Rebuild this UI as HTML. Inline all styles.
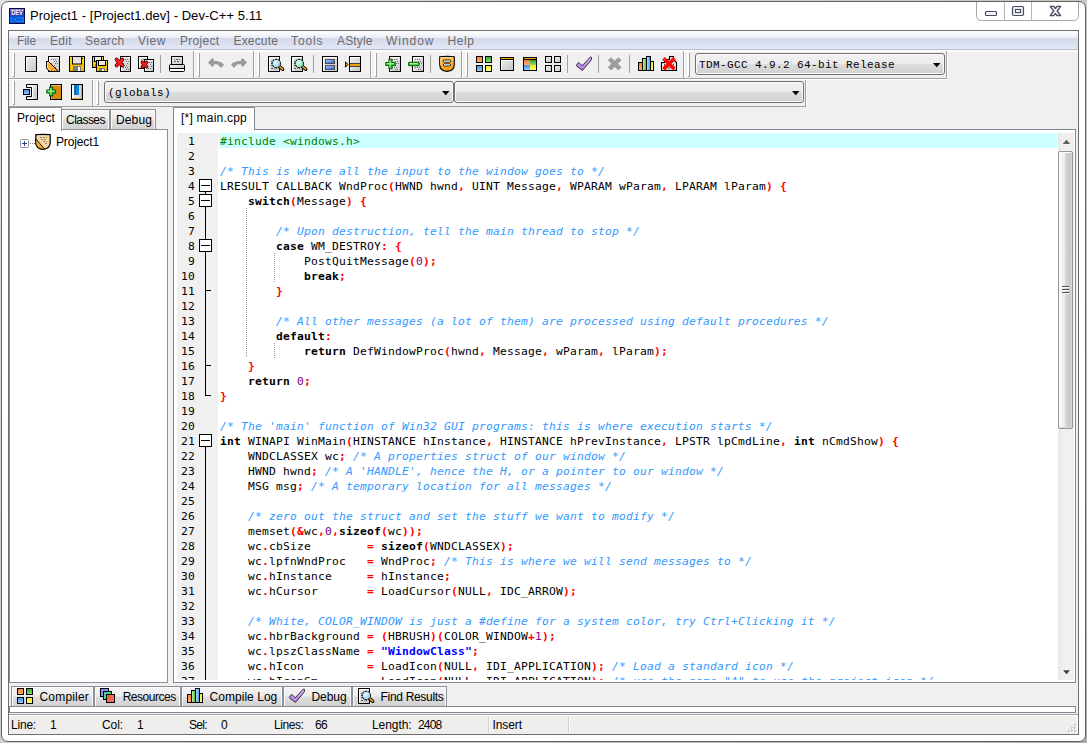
<!DOCTYPE html>
<html lang="en"><head><meta charset="utf-8"><title>Project1 - [Project1.dev] - Dev-C++ 5.11</title>
<style>
html,body{margin:0;padding:0;}
body{width:1087px;height:743px;overflow:hidden;background:linear-gradient(135deg,#e2e2e2 0%,#cfcfcf 35%,#c4c4c4 70%,#adadad 100%);position:relative;font-family:"Liberation Sans", "DejaVu Sans", sans-serif;font-size:12px;}
body>div,body>svg,body>span{position:absolute;}
.ic{position:absolute;overflow:visible;}
.t{position:absolute;white-space:pre;line-height:16px;height:16px;margin-top:-12px;color:#000;font-family:"Liberation Sans", "DejaVu Sans", sans-serif;font-size:12px;}
.title{font-size:13px;}
.menu{color:#6d6d6d;}
.mono{font-family:"Liberation Mono", "DejaVu Sans Mono", monospace;font-size:11px;letter-spacing:0.4px;}
#code,#nums{font-family:"DejaVu Sans Mono", "Liberation Mono", monospace;font-size:11.3px;overflow:hidden;color:#000;}
#code{letter-spacing:0.197px;}
#nums{text-align:right;letter-spacing:0.197px;}
.ln{height:15px;line-height:15px;white-space:pre;}
.c{color:#3399ff;font-style:italic;}
.p{color:#008000;}
.k{font-weight:bold;}
.y{color:#ff0000;font-weight:bold;}
.n{color:#800080;}
.s{color:#0000ff;font-weight:bold;}
</style></head>
<body>
<svg width="0" height="0" style="position:absolute"><defs>
<linearGradient id="gG" x1="0" y1="0" x2="1" y2="1"><stop offset="0" stop-color="#ececec"/><stop offset="0.5" stop-color="#dcdcdc"/><stop offset="1" stop-color="#c4c4c4"/></linearGradient>
<linearGradient id="gY" x1="0" y1="0" x2="0" y2="1"><stop offset="0" stop-color="#ffe600"/><stop offset="1" stop-color="#eeb400"/></linearGradient>
<linearGradient id="gO" x1="0" y1="0" x2="0" y2="1"><stop offset="0" stop-color="#ff7a30"/><stop offset="1" stop-color="#ffb070"/></linearGradient>
<linearGradient id="gGr" x1="0" y1="0" x2="0" y2="1"><stop offset="0" stop-color="#2f9e2f"/><stop offset="1" stop-color="#8fe070"/></linearGradient>
<linearGradient id="gB" x1="0" y1="0" x2="0" y2="1"><stop offset="0" stop-color="#3c90e8"/><stop offset="1" stop-color="#9ccdfc"/></linearGradient>
<linearGradient id="gYl" x1="0" y1="0" x2="0" y2="1"><stop offset="0" stop-color="#f6e820"/><stop offset="1" stop-color="#fffc80"/></linearGradient>
<linearGradient id="gSh" x1="0" y1="0" x2="0" y2="1"><stop offset="0" stop-color="#ffc050"/><stop offset="1" stop-color="#f79a10"/></linearGradient>
<linearGradient id="gP" x1="0" y1="0" x2="0" y2="1"><stop offset="0" stop-color="#d9b8ff"/><stop offset="1" stop-color="#b07cf0"/></linearGradient>
<linearGradient id="gB2" x1="0" y1="0" x2="0.6" y2="1"><stop offset="0" stop-color="#c0d8ff"/><stop offset="1" stop-color="#2a6ae0"/></linearGradient>
<linearGradient id="gGr2" x1="0" y1="0" x2="1" y2="0"><stop offset="0" stop-color="#c8f8a0"/><stop offset="1" stop-color="#48b838"/></linearGradient>
<linearGradient id="gB3" x1="0" y1="0" x2="1" y2="0"><stop offset="0" stop-color="#b8dcff"/><stop offset="1" stop-color="#4898f0"/></linearGradient>
<radialGradient id="gLb" cx="0.4" cy="0.4" r="0.7"><stop offset="0" stop-color="#e8fbff"/><stop offset="1" stop-color="#8cd0e8"/></radialGradient>
<radialGradient id="gLg" cx="0.4" cy="0.4" r="0.7"><stop offset="0" stop-color="#e0fff0"/><stop offset="1" stop-color="#7fdcb0"/></radialGradient>
</defs></svg>
<div style="left:1px;top:1px;width:1085px;height:741px;border:1px solid #626262;border-radius:7px;background:#fff;box-sizing:border-box;"></div>
<svg class="ic" style="left:9px;top:8px" width="16" height="16" viewBox="0 0 16 16"><rect x="0.500" y="0.500" width="15" height="15" fill="#1838b8" stroke="#0a0a3c"/><rect x="1" y="1" width="14" height="1" fill="#8c8cd8"/><rect x="1" y="2" width="14" height="1" fill="#5a60c8"/><rect x="1" y="3" width="14" height="5" fill="#2a44bc"/><rect x="1" y="8" width="14" height="1" fill="#0c50d8"/><rect x="1" y="9" width="14" height="6" fill="#0e7cf8"/><rect x="1" y="14" width="14" height="1" fill="#0a58d0"/><text x="8" y="7.200" text-anchor="middle" font-family="Liberation Sans, sans-serif" font-weight="bold" font-size="6.500" fill="#fff" textLength="11.500" lengthAdjust="spacingAndGlyphs">DEV</text><text x="8" y="13.600" text-anchor="middle" font-family="Liberation Sans, sans-serif" font-weight="bold" font-size="6.500" fill="#0a46c4" textLength="11" lengthAdjust="spacingAndGlyphs">C++</text></svg>
<span id="t1" class="t ui title" style="left:30px;top:20px;letter-spacing:0.05px;">Project1 - [Project1.dev] - Dev-C++ 5.11</span>
<svg class="ic" style="left:976px;top:2px" width="104" height="20" viewBox="0 1 104 20">
<path d="M0.5,1 V14.5 Q0.5,19.5 5.5,19.5 H97.5 Q102.5,19.5 102.5,14.5 V1" fill="#fff" stroke="#a6a6a6" stroke-width="1"/>
<path d="M28.5,1 V19 M55.5,1 V19" stroke="#b4b4b4" stroke-width="1"/>
<rect x="9.5" y="10.5" width="11" height="4" rx="1" fill="#f4f4f4" stroke="#454c66" stroke-width="1.2"/>
<rect x="36.500" y="5.500" width="11" height="9" rx="1.2" fill="#eee" stroke="#454c66" stroke-width="1.2"/>
<rect x="39.5" y="8.5" width="5" height="3" fill="#fff" stroke="#454c66" stroke-width="1.1"/>
<path d="M74.200,5.400 L77.800,5.400 L79.400,7.560 L81,5.400 L84.600,5.400 L81.200,10 L84.600,14.600 L81,14.600 L79.400,12.440 L77.800,14.600 L74.200,14.600 L77.600,10 Z" fill="#f2f2f2" stroke="#454c66" stroke-width="1.300" stroke-linejoin="round"/>
</svg>
<div style="left:8px;top:30px;width:1071px;height:705px;border:1px solid #6e6e6e;box-sizing:border-box;background:#f0f0f0;"></div>
<div style="left:9px;top:31px;width:1069px;height:18px;background:linear-gradient(#ffffff 0%,#f4f6fc 20%,#e9edf8 38.8%,#d4d9ec 39%,#dbe0f0 70%,#e3e7f6 100%);"></div>
<div style="left:9px;top:49px;width:1069px;height:1px;background:#b6bccf;"></div>
<div style="left:9px;top:50px;width:1069px;height:2px;background:#fdfdfd;"></div>
<span id="t2" class="t ui menu" style="left:17px;top:45px;letter-spacing:-0.086px;">File</span>
<span id="t3" class="t ui menu" style="left:50px;top:45px;letter-spacing:0.328px;">Edit</span>
<span id="t4" class="t ui menu" style="left:85px;top:45px;letter-spacing:0.245px;">Search</span>
<span id="t5" class="t ui menu" style="left:138px;top:45px;letter-spacing:0.551px;">View</span>
<span id="t6" class="t ui menu" style="left:180px;top:45px;letter-spacing:0.306px;">Project</span>
<span id="t7" class="t ui menu" style="left:233.5px;top:45px;letter-spacing:0.163px;">Execute</span>
<span id="t8" class="t ui menu" style="left:291px;top:45px;letter-spacing:0.897px;">Tools</span>
<span id="t9" class="t ui menu" style="left:337px;top:45px;letter-spacing:0.135px;">AStyle</span>
<span id="t10" class="t ui menu" style="left:386px;top:45px;letter-spacing:0.969px;">Window</span>
<span id="t11" class="t ui menu" style="left:447.5px;top:45px;letter-spacing:0.578px;">Help</span>
<div style="left:9px;top:78px;width:938px;height:1px;background:#a0a0a0;"></div>
<div style="left:9px;top:79px;width:938px;height:1px;background:#fff;"></div>
<div style="left:12px;top:53px;width:2px;height:23px;background:#fff;"></div>
<div style="left:14px;top:53px;width:1px;height:24px;background:#a0a0a0;"></div>
<div style="left:13px;top:76px;width:1px;height:1px;background:#a0a0a0;"></div>
<div style="left:197px;top:53px;width:2px;height:23px;background:#fff;"></div>
<div style="left:199px;top:53px;width:1px;height:24px;background:#a0a0a0;"></div>
<div style="left:198px;top:76px;width:1px;height:1px;background:#a0a0a0;"></div>
<div style="left:257px;top:53px;width:2px;height:23px;background:#fff;"></div>
<div style="left:259px;top:53px;width:1px;height:24px;background:#a0a0a0;"></div>
<div style="left:258px;top:76px;width:1px;height:1px;background:#a0a0a0;"></div>
<div style="left:374px;top:53px;width:2px;height:23px;background:#fff;"></div>
<div style="left:376px;top:53px;width:1px;height:24px;background:#a0a0a0;"></div>
<div style="left:375px;top:76px;width:1px;height:1px;background:#a0a0a0;"></div>
<div style="left:465px;top:53px;width:2px;height:23px;background:#fff;"></div>
<div style="left:467px;top:53px;width:1px;height:24px;background:#a0a0a0;"></div>
<div style="left:466px;top:76px;width:1px;height:1px;background:#a0a0a0;"></div>
<div style="left:687px;top:53px;width:2px;height:23px;background:#fff;"></div>
<div style="left:689px;top:53px;width:1px;height:24px;background:#a0a0a0;"></div>
<div style="left:688px;top:76px;width:1px;height:1px;background:#a0a0a0;"></div>
<div style="left:193px;top:51px;width:1px;height:27px;background:#a0a0a0;"></div>
<div style="left:194px;top:51px;width:1px;height:27px;background:#fff;"></div>
<div style="left:253px;top:51px;width:1px;height:27px;background:#a0a0a0;"></div>
<div style="left:254px;top:51px;width:1px;height:27px;background:#fff;"></div>
<div style="left:370px;top:51px;width:1px;height:27px;background:#a0a0a0;"></div>
<div style="left:371px;top:51px;width:1px;height:27px;background:#fff;"></div>
<div style="left:461px;top:51px;width:1px;height:27px;background:#a0a0a0;"></div>
<div style="left:462px;top:51px;width:1px;height:27px;background:#fff;"></div>
<div style="left:683px;top:51px;width:1px;height:27px;background:#a0a0a0;"></div>
<div style="left:684px;top:51px;width:1px;height:27px;background:#fff;"></div>
<div style="left:946px;top:51px;width:1px;height:27px;background:#a0a0a0;"></div>
<div style="left:947px;top:51px;width:1px;height:27px;background:#fff;"></div>
<svg class="ic" style="left:23px;top:56px" width="16" height="16" viewBox="0 0 16 16"><rect x="2.5" y="0.5" width="11" height="15" fill="url(#gG)" stroke="#000" stroke-width="1"/><path d="M3.5,15 V1.5 H13" fill="none" stroke="#fff" stroke-width="1"/></svg>
<svg class="ic" style="left:46px;top:56px" width="16" height="16" viewBox="0 0 16 16"><rect x="2.5" y="0.5" width="11" height="15" fill="url(#gG)" stroke="#000" stroke-width="1"/><path d="M3.5,15 V1.5 H13" fill="none" stroke="#fff" stroke-width="1"/><rect x="5" y="3" width="1" height="1" fill="#707070"/><rect x="7" y="3" width="1" height="1" fill="#707070"/><rect x="9" y="3" width="1" height="1" fill="#707070"/><rect x="8" y="5" width="1" height="1" fill="#707070"/><rect x="10" y="5" width="1" height="1" fill="#707070"/><rect x="5" y="7" width="1" height="1" fill="#707070"/><rect x="9" y="7" width="1" height="1" fill="#707070"/><rect x="11" y="7" width="1" height="1" fill="#707070"/><rect x="6" y="9" width="1" height="1" fill="#707070"/><rect x="8" y="9" width="1" height="1" fill="#707070"/><rect x="5" y="11" width="1" height="1" fill="#707070"/><rect x="7" y="11" width="1" height="1" fill="#707070"/><rect x="9" y="11" width="1" height="1" fill="#707070"/><rect x="8" y="13" width="1" height="1" fill="#707070"/><rect x="10" y="13" width="1" height="1" fill="#707070"/><path d="M2.5,5.500 L0.500,5.500 V11 Q1,15.500 7,15.500 H12.500 Z" fill="url(#gSh)" stroke="#000" stroke-width="1" stroke-linejoin="round"/><path d="M1.500,6.500 V11 Q2,14 5,14.500" fill="none" stroke="#ffe0a0" stroke-width="1"/></svg>
<svg class="ic" style="left:69px;top:56px" width="16" height="16" viewBox="0 0 16 16"><rect x="0.5" y="0.5" width="15" height="15" fill="url(#gY)" stroke="#000"/><rect x="3.5" y="0.5" width="9" height="7.5" fill="#e4e4e4" stroke="#000"/><rect x="4" y="10" width="8" height="5" fill="#7c7c7c"/><rect x="9" y="11" width="2" height="4" fill="#fff"/><rect x="13" y="2" width="1" height="1" fill="#000"/></svg>
<svg class="ic" style="left:92px;top:56px" width="16" height="16" viewBox="0 0 16 16"><rect x="0.5" y="0.5" width="11" height="11" fill="url(#gY)" stroke="#000"/><rect x="2.5" y="0.5" width="7" height="5" fill="#ececec" stroke="#000"/><rect x="3" y="8" width="6" height="3" fill="#7c7c7c"/><rect x="6" y="9" width="2" height="2" fill="#e8e8e8"/><rect x="10" y="1" width="1" height="1" fill="#fff8a0"/><rect x="4.5" y="4.5" width="11" height="11" fill="url(#gY)" stroke="#000"/><rect x="6.5" y="4.5" width="7" height="5" fill="#ececec" stroke="#000"/><rect x="7" y="12" width="6" height="3" fill="#7c7c7c"/><rect x="10" y="13" width="2" height="2" fill="#e8e8e8"/><rect x="14" y="5" width="1" height="1" fill="#fff8a0"/></svg>
<svg class="ic" style="left:115px;top:56px" width="16" height="16" viewBox="0 0 16 16"><rect x="5.5" y="0.5" width="10" height="15" fill="url(#gG)" stroke="#000" stroke-width="1"/><path d="M6.5,15 V1.5 H15" fill="none" stroke="#fff" stroke-width="1"/><rect x="8" y="3" width="1" height="1" fill="#707070"/><rect x="10" y="3" width="1" height="1" fill="#707070"/><rect x="12" y="3" width="1" height="1" fill="#707070"/><rect x="11" y="5" width="1" height="1" fill="#707070"/><rect x="13" y="5" width="1" height="1" fill="#707070"/><rect x="8" y="7" width="1" height="1" fill="#707070"/><rect x="12" y="7" width="1" height="1" fill="#707070"/><rect x="9" y="9" width="1" height="1" fill="#707070"/><rect x="11" y="9" width="1" height="1" fill="#707070"/><rect x="8" y="11" width="1" height="1" fill="#707070"/><rect x="10" y="11" width="1" height="1" fill="#707070"/><rect x="12" y="11" width="1" height="1" fill="#707070"/><rect x="11" y="13" width="1" height="1" fill="#707070"/><rect x="13" y="13" width="1" height="1" fill="#707070"/><path d="M1.6,3.6 L7.4,9.4 M7.4,3.6 L1.6,9.4" stroke="#600000" stroke-width="3.8000000000000003" stroke-linecap="round" fill="none"/><path d="M1.6,3.6 L7.4,9.4 M7.4,3.6 L1.6,9.4" stroke="#ff2020" stroke-width="2.2" stroke-linecap="round" fill="none"/></svg>
<svg class="ic" style="left:138px;top:56px" width="16" height="16" viewBox="0 0 16 16"><rect x="0.5" y="0.5" width="9" height="12" fill="url(#gG)" stroke="#000" stroke-width="1"/><path d="M1.5,12 V1.5 H9" fill="none" stroke="#fff" stroke-width="1"/><rect x="3" y="3" width="1" height="1" fill="#707070"/><rect x="5" y="3" width="1" height="1" fill="#707070"/><rect x="7" y="3" width="1" height="1" fill="#707070"/><rect x="6" y="5" width="1" height="1" fill="#707070"/><rect x="3" y="7" width="1" height="1" fill="#707070"/><rect x="7" y="7" width="1" height="1" fill="#707070"/><rect x="4" y="9" width="1" height="1" fill="#707070"/><rect x="6" y="9" width="1" height="1" fill="#707070"/><rect x="6.5" y="3.5" width="9" height="12" fill="url(#gG)" stroke="#000" stroke-width="1"/><path d="M7.5,15 V4.5 H15" fill="none" stroke="#fff" stroke-width="1"/><rect x="9" y="6" width="1" height="1" fill="#707070"/><rect x="11" y="6" width="1" height="1" fill="#707070"/><rect x="13" y="6" width="1" height="1" fill="#707070"/><rect x="12" y="8" width="1" height="1" fill="#707070"/><rect x="9" y="10" width="1" height="1" fill="#707070"/><rect x="13" y="10" width="1" height="1" fill="#707070"/><rect x="10" y="12" width="1" height="1" fill="#707070"/><rect x="12" y="12" width="1" height="1" fill="#707070"/><path d="M4.3,6.3 L8.7,10.7 M8.7,6.3 L4.3,10.7" stroke="#600000" stroke-width="3.4000000000000004" stroke-linecap="round" fill="none"/><path d="M4.3,6.3 L8.7,10.7 M8.7,6.3 L4.3,10.7" stroke="#ff2020" stroke-width="1.8" stroke-linecap="round" fill="none"/></svg>
<svg class="ic" style="left:169px;top:56px" width="16" height="16" viewBox="0 0 16 16"><rect x="2.5" y="0.5" width="11" height="8" fill="url(#gG)" stroke="#000"/><path d="M5,3.500 H6 M7,3.500 H9 M10,3.500 H11 M5,5.500 H7 M8,5.500 H10" stroke="#606060"/><rect x="0.5" y="8.5" width="15" height="7" rx="1" fill="#fff" stroke="#000"/><rect x="1" y="9" width="14" height="3" fill="url(#gG)"/><path d="M0.500,12.500 H15.500" stroke="#000"/></svg>
<svg class="ic" style="left:208px;top:56px" width="16" height="16" viewBox="0 0 16 16"><path d="M0,6.400 L4.400,2 L5.900,3.400 L5.900,5 L9.700,5 L11.300,6 L13.400,6.200 L16,8.800 L13,11.900 L9.800,8.600 L7.500,8.200 L5.900,8.200 L5.900,9.600 L4.400,11 Z" fill="#9b9b9b"/></svg>
<svg class="ic" style="left:231px;top:56px" width="16" height="16" viewBox="0 0 16 16"><g transform="translate(16,0) scale(-1,1)"><path d="M0,6.400 L4.400,2 L5.900,3.400 L5.900,5 L9.700,5 L11.300,6 L13.400,6.200 L16,8.800 L13,11.900 L9.800,8.600 L7.500,8.200 L5.900,8.200 L5.900,9.600 L4.400,11 Z" fill="#9b9b9b"/></g></svg>
<svg class="ic" style="left:268px;top:56px" width="16" height="16" viewBox="0 0 16 16"><rect x="0.5" y="0.5" width="11" height="15" fill="url(#gG)" stroke="#000" stroke-width="1"/><path d="M1.5,15 V1.5 H11" fill="none" stroke="#fff" stroke-width="1"/><path d="M3,5.500 H4 M3,7.500 H4 M3,9.500 H4 M3,12.500 H5 M6,12.500 H7 M8,12.500 H9" stroke="#505050"/><path d="M11.5,10.600000000000001 L14.700000000000001,13.3" stroke="#000" stroke-width="3.4" stroke-linecap="round"/><path d="M11.9,10.8 L14.600000000000001,13.100000000000001" stroke="#f0a020" stroke-width="1.7" stroke-linecap="round"/><circle cx="8.3" cy="7.4" r="4.1" fill="url(#gLb)" stroke="#111" stroke-width="1.1" stroke-dasharray="2.2,0.7"/><circle cx="8.3" cy="7.4" r="3.4" fill="url(#gLb)"/></svg>
<svg class="ic" style="left:291px;top:56px" width="16" height="16" viewBox="0 0 16 16"><rect x="0.5" y="0.5" width="11" height="15" fill="url(#gG)" stroke="#000" stroke-width="1"/><path d="M1.5,15 V1.5 H11" fill="none" stroke="#fff" stroke-width="1"/><path d="M3,5.500 H4 M3,7.500 H4 M3,9.500 H4 M3,12.500 H5 M6,12.500 H7 M8,12.500 H9" stroke="#505050"/><path d="M11.5,10.600000000000001 L14.700000000000001,13.3" stroke="#000" stroke-width="3.4" stroke-linecap="round"/><path d="M11.9,10.8 L14.600000000000001,13.100000000000001" stroke="#f0a020" stroke-width="1.7" stroke-linecap="round"/><circle cx="8.3" cy="7.4" r="4.1" fill="url(#gLg)" stroke="#111" stroke-width="1.1" stroke-dasharray="2.2,0.7"/><circle cx="8.3" cy="7.4" r="3.4" fill="url(#gLg)"/></svg>
<svg class="ic" style="left:322px;top:56px" width="16" height="16" viewBox="0 0 16 16"><rect x="0.5" y="0.5" width="15" height="15" fill="url(#gG)" stroke="#000"/><path d="M1.500,15 V1.500 H15" fill="none" stroke="#fff"/><rect x="3.5" y="3.500" width="9" height="4" fill="url(#gB2)" stroke="#505050"/><rect x="3.5" y="9.500" width="9" height="4" fill="url(#gB2)" stroke="#505050"/></svg>
<svg class="ic" style="left:345px;top:56px" width="16" height="16" viewBox="0 0 16 16"><rect x="4.5" y="0.5" width="11" height="15" fill="url(#gG)" stroke="#000"/><path d="M5.500,15 V1.500 H15" fill="none" stroke="#fff"/><rect x="5" y="8" width="10" height="2" fill="#f0a000"/><path d="M5,7.500 H15 M5,10.500 H15" stroke="#404040" stroke-width="1"/><path d="M0.500,5.800 L3,8.500 L0.500,11.200 Z" fill="#f0a000" stroke="#000" stroke-width="0.9"/></svg>
<svg class="ic" style="left:385px;top:56px" width="16" height="16" viewBox="0 0 16 16"><rect x="4.5" y="0.5" width="11" height="15" fill="url(#gG)" stroke="#000" stroke-width="1"/><path d="M5.5,15 V1.5 H15" fill="none" stroke="#fff" stroke-width="1"/><rect x="7" y="3" width="1" height="1" fill="#707070"/><rect x="9" y="3" width="1" height="1" fill="#707070"/><rect x="11" y="3" width="1" height="1" fill="#707070"/><rect x="10" y="5" width="1" height="1" fill="#707070"/><rect x="12" y="5" width="1" height="1" fill="#707070"/><rect x="7" y="7" width="1" height="1" fill="#707070"/><rect x="11" y="7" width="1" height="1" fill="#707070"/><rect x="13" y="7" width="1" height="1" fill="#707070"/><rect x="8" y="9" width="1" height="1" fill="#707070"/><rect x="10" y="9" width="1" height="1" fill="#707070"/><rect x="7" y="11" width="1" height="1" fill="#707070"/><rect x="9" y="11" width="1" height="1" fill="#707070"/><rect x="11" y="11" width="1" height="1" fill="#707070"/><rect x="10" y="13" width="1" height="1" fill="#707070"/><rect x="12" y="13" width="1" height="1" fill="#707070"/><path d="M4.00,3.30 L7.00,3.30 L7.00,6.50 L10.20,6.50 L10.20,9.50 L7.00,9.50 L7.00,12.70 L4.00,12.70 L4.00,9.50 L0.80,9.50 L0.80,6.50 L4.00,6.50 Z" fill="#3ad43a" stroke="#0c5c0c" stroke-width="1.1" stroke-linejoin="round"/><path d="M1.80,7.60 H9.00 M5.10,4.30 V11.50" stroke="#b0ffa0" stroke-width="0.9" fill="none"/></svg>
<svg class="ic" style="left:408px;top:56px" width="16" height="16" viewBox="0 0 16 16"><rect x="4.5" y="0.5" width="11" height="15" fill="url(#gG)" stroke="#000" stroke-width="1"/><path d="M5.5,15 V1.5 H15" fill="none" stroke="#fff" stroke-width="1"/><rect x="7" y="3" width="1" height="1" fill="#707070"/><rect x="9" y="3" width="1" height="1" fill="#707070"/><rect x="11" y="3" width="1" height="1" fill="#707070"/><rect x="10" y="5" width="1" height="1" fill="#707070"/><rect x="12" y="5" width="1" height="1" fill="#707070"/><rect x="7" y="7" width="1" height="1" fill="#707070"/><rect x="11" y="7" width="1" height="1" fill="#707070"/><rect x="13" y="7" width="1" height="1" fill="#707070"/><rect x="8" y="9" width="1" height="1" fill="#707070"/><rect x="10" y="9" width="1" height="1" fill="#707070"/><rect x="7" y="11" width="1" height="1" fill="#707070"/><rect x="9" y="11" width="1" height="1" fill="#707070"/><rect x="11" y="11" width="1" height="1" fill="#707070"/><rect x="10" y="13" width="1" height="1" fill="#707070"/><rect x="12" y="13" width="1" height="1" fill="#707070"/><rect x="0.600" y="6.300" width="10.400" height="3.400" rx="1" fill="#3ad43a" stroke="#0c5c0c" stroke-width="1.100"/><path d="M1.600,7.600 H10" stroke="#b0ffa0" stroke-width="0.900"/></svg>
<svg class="ic" style="left:439px;top:56px" width="16" height="16" viewBox="0 0 16 16"><path d="M0.700,0.700 Q8,0 15.300,0.700 V8.500 Q15.300,14.800 8,15.400 Q0.700,14.800 0.700,8.500 Z" fill="url(#gSh)" stroke="#000" stroke-width="1.100"/><path d="M1.800,9 V1.800 Q8,1 14,1.800" fill="none" stroke="#ffe2a0" stroke-width="1"/><rect x="4.300" y="4" width="7.400" height="2.200" rx="1.100" fill="#fff" stroke="#000" stroke-width="0.800"/><rect x="4.300" y="7.800" width="7.400" height="2.200" rx="1.100" fill="#fff" stroke="#000" stroke-width="0.800"/></svg>
<svg class="ic" style="left:476px;top:56px" width="16" height="16" viewBox="0 0 16 16"><rect x="0.5" y="0.5" width="6" height="6" fill="url(#gO)" stroke="#000"/><rect x="9.5" y="0.5" width="6" height="6" fill="url(#gGr)" stroke="#000"/><rect x="0.5" y="9.5" width="6" height="6" fill="url(#gB)" stroke="#000"/><rect x="9.5" y="9.5" width="6" height="6" fill="url(#gYl)" stroke="#000"/></svg>
<svg class="ic" style="left:499px;top:56px" width="16" height="16" viewBox="0 0 16 16"><rect x="1.500" y="1.500" width="13" height="13" fill="url(#gG)" stroke="#000"/><path d="M2.500,14 V4.500 H14" fill="none" stroke="#fff"/><rect x="2" y="2" width="12" height="1" fill="#ffa000"/><rect x="2" y="3" width="12" height="1" fill="#000"/></svg>
<svg class="ic" style="left:522px;top:56px" width="16" height="16" viewBox="0 0 16 16"><rect x="1.500" y="1.500" width="13" height="13" fill="#ddd" stroke="#000"/><rect x="2" y="2" width="12" height="1" fill="#ffa000"/><rect x="2" y="3" width="12" height="1" fill="#000"/><rect x="2" y="4" width="6" height="5" fill="url(#gO)"/><rect x="8" y="4" width="6" height="5" fill="url(#gGr)"/><rect x="2" y="9" width="6" height="5" fill="url(#gB)"/><rect x="8" y="9" width="6" height="5" fill="url(#gYl)"/></svg>
<svg class="ic" style="left:545px;top:56px" width="16" height="16" viewBox="0 0 16 16"><rect x="0.5" y="0.5" width="6" height="6" fill="url(#gG)" stroke="#000"/><rect x="9.5" y="0.5" width="6" height="6" fill="url(#gG)" stroke="#000"/><rect x="0.5" y="9.5" width="6" height="6" fill="url(#gG)" stroke="#000"/><rect x="9.5" y="9.5" width="6" height="6" fill="url(#gG)" stroke="#000"/></svg>
<svg class="ic" style="left:576px;top:56px" width="16" height="16" viewBox="0 0 16 16"><path d="M0.800,8.300 L2.800,6.400 L6.200,9.800 L14.600,0.800 L15.400,1.400 L15.400,3.800 L6.400,14.400 L0.800,10.200 Z" fill="url(#gP)" stroke="#1a1a1a" stroke-width="0.900" stroke-linejoin="round"/></svg>
<svg class="ic" style="left:607px;top:56px" width="16" height="16" viewBox="0 0 16 16"><path d="M0.500,4 L4,0.500 L8,4.500 L12,0.500 L15.500,4 L11.500,8 L15.500,12 L12,15.500 L8,11.500 L4,15.500 L0.500,12 L4.500,8 Z" fill="#9c9c9c" transform="translate(0.300,0.800) scale(0.920,0.880)"/></svg>
<svg class="ic" style="left:638px;top:56px" width="16" height="16" viewBox="0 0 16 16"><rect x="0.500" y="6.500" width="4" height="8" fill="url(#gO)" stroke="#000"/><rect x="4.500" y="2.500" width="4" height="12" fill="url(#gGr2)" stroke="#000"/><rect x="8.500" y="0.500" width="4" height="14" fill="url(#gB3)" stroke="#000"/><rect x="12.500" y="5.500" width="3" height="9" fill="url(#gYl)" stroke="#000"/></svg>
<svg class="ic" style="left:661px;top:56px" width="16" height="16" viewBox="0 0 16 16"><path d="M0.500,14.500 V6.500 H3.500 V3.500 H8.500 V0.500 H12.500 V3.500 L15.500,6.500 V14.500 Z" fill="#d4d4d4" stroke="#000" stroke-width="1.100"/><path d="M2,13 V8 M5,13 V5 M11,13 V3 M14,13 V8" stroke="#fff" stroke-width="1.600" stroke-dasharray="2,1.500"/><path d="M3.500,13 V8 M8,13 V5 M12.500,13 V8" stroke="#404040" stroke-width="1" stroke-dasharray="1.500,2"/><path d="M3.800,3.500 L12.200,12 M12.200,3.500 L3.800,12" stroke="#ff0000" stroke-width="3.600" stroke-linecap="square" fill="none"/><path d="M3.500,4 L5,2.500 M10.500,4 L12,2.500" stroke="#ff6060" stroke-width="1" fill="none"/></svg>
<div style="left:160px;top:55px;width:1px;height:18px;background:#a0a0a0;"></div>
<div style="left:313px;top:55px;width:1px;height:18px;background:#a0a0a0;"></div>
<div style="left:430px;top:55px;width:1px;height:18px;background:#a0a0a0;"></div>
<div style="left:567px;top:55px;width:1px;height:18px;background:#a0a0a0;"></div>
<div style="left:598px;top:55px;width:1px;height:18px;background:#a0a0a0;"></div>
<div style="left:629px;top:55px;width:1px;height:18px;background:#a0a0a0;"></div>
<div style="left:695px;top:53px;width:250px;height:22px;box-sizing:border-box;border:1px solid #707070;border-radius:3px;background:linear-gradient(#f2f2f2 0%,#ebebeb 48%,#dddddd 52%,#cfcfcf 100%);box-shadow:inset 0 0 0 1px #fcfcfc;"></div>
<svg class="ic" style="left:933px;top:63px" width="8" height="5" viewBox="0 0 8 5"><path d="M0,0 H7.500 L3.750,4.200 Z" fill="#000"/></svg>
<span id="t12" class="t mono combo" style="left:699px;top:69px;">TDM-GCC 4.9.2 64-bit Release</span>
<div style="left:9px;top:106px;width:797px;height:1px;background:#a0a0a0;"></div>
<div style="left:12px;top:81px;width:2px;height:23px;background:#fff;"></div>
<div style="left:14px;top:81px;width:1px;height:24px;background:#a0a0a0;"></div>
<div style="left:13px;top:104px;width:1px;height:1px;background:#a0a0a0;"></div>
<div style="left:96px;top:81px;width:2px;height:23px;background:#fff;"></div>
<div style="left:98px;top:81px;width:1px;height:24px;background:#a0a0a0;"></div>
<div style="left:97px;top:104px;width:1px;height:1px;background:#a0a0a0;"></div>
<div style="left:92px;top:80px;width:1px;height:26px;background:#a0a0a0;"></div>
<div style="left:93px;top:80px;width:1px;height:26px;background:#fff;"></div>
<div style="left:805px;top:80px;width:1px;height:26px;background:#a0a0a0;"></div>
<div style="left:806px;top:80px;width:1px;height:26px;background:#fff;"></div>
<svg class="ic" style="left:22px;top:84px" width="16" height="16" viewBox="0 0 16 16"><path d="M4.500,0.500 H15.500 V15.500 H4.500 V12.500 H9.500 V3.500 H4.500 Z" fill="url(#gG)" stroke="#000"/><path d="M5.500,1.500 H10.500 V14.500 H5.500" fill="none" stroke="#fff"/><rect x="1.500" y="5.500" width="6" height="5" fill="url(#gB)" stroke="#000"/></svg>
<svg class="ic" style="left:46px;top:84px" width="16" height="16" viewBox="0 0 16 16"><rect x="4.500" y="0.500" width="11" height="15" fill="#d88a10" stroke="#000"/><path d="M5.500,15 V1.500 H15" fill="none" stroke="#f0b860"/><path d="M3.70,3.10 L6.70,3.10 L6.70,6.00 L9.60,6.00 L9.60,9.00 L6.70,9.00 L6.70,11.90 L3.70,11.90 L3.70,9.00 L0.80,9.00 L0.80,6.00 L3.70,6.00 Z" fill="#3ad43a" stroke="#0c5c0c" stroke-width="1.1" stroke-linejoin="round"/><path d="M1.80,7.10 H8.40 M4.80,4.10 V10.70" stroke="#b0ffa0" stroke-width="0.9" fill="none"/></svg>
<svg class="ic" style="left:69px;top:84px" width="16" height="16" viewBox="0 0 16 16"><rect x="2.500" y="0.500" width="11" height="15" fill="#ececec" stroke="#000"/><rect x="3" y="1" width="2" height="13" fill="#fff"/><rect x="10" y="1" width="2" height="13" fill="#d4d4d4"/><rect x="5" y="11" width="5" height="3" fill="#e2e2e2"/><rect x="12" y="1" width="1" height="14" fill="#f0a020"/><rect x="3" y="14" width="10" height="1" fill="#f0a020"/><rect x="5" y="1" width="5" height="10" fill="#1488d8"/><rect x="5" y="1" width="2" height="10" fill="#0a6ab4"/></svg>
<div style="left:104px;top:81px;width:350px;height:22px;box-sizing:border-box;border:1px solid #707070;border-radius:3px;background:linear-gradient(#f2f2f2 0%,#ebebeb 48%,#dddddd 52%,#cfcfcf 100%);box-shadow:inset 0 0 0 1px #fcfcfc;"></div>
<svg class="ic" style="left:442px;top:91px" width="8" height="5" viewBox="0 0 8 5"><path d="M0,0 H7.500 L3.750,4.200 Z" fill="#000"/></svg>
<span id="t13" class="t mono combo" style="left:108px;top:97px;">(globals)</span>
<div style="left:454px;top:81px;width:350px;height:22px;box-sizing:border-box;border:1px solid #707070;border-radius:3px;background:linear-gradient(#f2f2f2 0%,#ebebeb 48%,#dddddd 52%,#cfcfcf 100%);box-shadow:inset 0 0 0 1px #fcfcfc;"></div>
<svg class="ic" style="left:792px;top:91px" width="8" height="5" viewBox="0 0 8 5"><path d="M0,0 H7.500 L3.750,4.200 Z" fill="#000"/></svg>
<div style="left:9px;top:129px;width:159px;height:554px;box-sizing:border-box;border:1px solid #8b8f97;background:#fff;"></div>
<div style="left:61px;top:109px;width:49px;height:21px;box-sizing:border-box;border:1px solid #8b8f97;border-bottom:1px solid #8b8f97;background:linear-gradient(#f4f4f4 0%,#ececec 48%,#dedede 52%,#d2d2d2 100%);box-shadow:inset 1px 1px 0 #fbfbfb,inset -1px 0 0 #fbfbfb;"></div>
<span id="t14" class="t ui" style="left:66px;top:124px;letter-spacing:-0.527px;">Classes</span>
<div style="left:110px;top:109px;width:46px;height:21px;box-sizing:border-box;border:1px solid #8b8f97;border-bottom:1px solid #8b8f97;background:linear-gradient(#f4f4f4 0%,#ececec 48%,#dedede 52%,#d2d2d2 100%);box-shadow:inset 1px 1px 0 #fbfbfb,inset -1px 0 0 #fbfbfb;"></div>
<span id="t15" class="t ui" style="left:116px;top:124px;letter-spacing:0.125px;">Debug</span>
<div style="left:9px;top:107px;width:53px;height:24px;box-sizing:border-box;border:1px solid #8b8f97;border-bottom:none;background:#fff;"></div>
<span id="t16" class="t ui" style="left:17px;top:122px;letter-spacing:0.092px;">Project</span>
<svg class="ic" style="left:20px;top:139px" width="16" height="9" viewBox="0 0 16 9"><rect x="0.5" y="0.5" width="8" height="8" rx="1" fill="#fff" stroke="#919191"/><path d="M2,4.500 H7 M4.500,2 V7" stroke="#2b3f8f" stroke-width="1"/><path d="M10,4.500 H15" stroke="#808080" stroke-width="1" stroke-dasharray="1,1"/></svg>
<svg class="ic" style="left:35px;top:134px" width="16" height="16" viewBox="0 0 16 16"><path d="M0.800,0.700 Q8,0 15.200,0.700 V8.500 Q15.200,14.600 8,15.400 Q0.800,14.600 0.800,8.500 Z" fill="#f0d8a8" stroke="#000" stroke-width="1.200"/><path d="M5,3.500 H7 M8,3.500 H10 M11,3.500 H12 M6,5.500 H8 M9,5.500 H11 M8,7.500 H10 M11,7.500 H12 M10,9.500 H12" stroke="#a88850"/><path d="M1,5 L9.500,15 Q8,15.400 8,15.400 Q0.800,14.600 0.800,8.500 Z" fill="url(#gSh)" stroke="#000" stroke-width="0.900"/></svg>
<span id="t17" class="t ui" style="left:56px;top:146px;letter-spacing:-0.129px;">Project1</span>
<div style="left:173px;top:129px;width:903px;height:554px;box-sizing:border-box;border:1px solid #828790;background:#fff;"></div>
<div style="left:173px;top:107px;width:82px;height:23px;box-sizing:border-box;border:1px solid #828790;border-bottom:none;background:#fff;"></div>
<span id="t18" class="t ui" style="left:181px;top:122px;letter-spacing:0.219px;">[*] main.cpp</span>
<div style="left:177px;top:133px;width:41px;height:547px;background:#f0f0f0;"></div>
<div style="left:219px;top:133px;width:838px;height:15px;background:#ccffff;"></div>
<div style="left:1058px;top:133px;width:16px;height:547px;background:linear-gradient(90deg,#e6e6e6 0%,#efefef 25%,#f0f0f0 100%);"></div>
<div style="left:1058px;top:151px;width:15px;height:278px;box-sizing:border-box;border:1px solid #959595;border-radius:2px;background:linear-gradient(90deg,#fafafa 0%,#ededed 40%,#e6e6e6 49%,#d2d2d6 51%,#c6c6ca 100%);box-shadow:inset 1px 1px 0 #fdfdfd,inset -1px -1px 0 #d8d8da;"></div>
<svg class="ic" style="left:1062px;top:286px" width="7" height="8" viewBox="0 0 7 8"><path d="M0,0.500 H7 M0,3.500 H7 M0,6.500 H7" stroke="#4c4c4c" stroke-width="1"/><path d="M0,1.500 H7 M0,4.500 H7 M0,7.500 H7" stroke="#fafafa" stroke-width="1"/></svg>
<svg class="ic" style="left:1062px;top:139px" width="8" height="5" viewBox="0 0 8 5"><path d="M0.700,5 L4.500,0.800 L8.300,5 Z" fill="#606060"/></svg>
<svg class="ic" style="left:1062px;top:670px" width="8" height="5" viewBox="0 0 8 5"><path d="M1,0.300 H8 L4.500,4.300 Z" fill="#404040"/></svg>
<div id="code" style="left:220px;top:134px;width:837px;height:546px;">
<div class="ln"><span class="p">#include &lt;windows.h&gt;</span></div>
<div class="ln"></div>
<div class="ln"><span class="c">/* This is where all the input to the window goes to */</span></div>
<div class="ln">LRESULT CALLBACK WndProc<span class="y">(</span>HWND hwnd<span class="y">,</span> UINT Message<span class="y">,</span> WPARAM wParam<span class="y">,</span> LPARAM lParam<span class="y">)</span> <span class="y">{</span></div>
<div class="ln">    <span class="k">switch</span><span class="y">(</span>Message<span class="y">)</span> <span class="y">{</span></div>
<div class="ln"></div>
<div class="ln">        <span class="c">/* Upon destruction, tell the main thread to stop */</span></div>
<div class="ln">        <span class="k">case</span> WM_DESTROY<span class="y">:</span> <span class="y">{</span></div>
<div class="ln">            PostQuitMessage<span class="y">(</span><span class="n">0</span><span class="y">);</span></div>
<div class="ln">            <span class="k">break</span><span class="y">;</span></div>
<div class="ln">        <span class="y">}</span></div>
<div class="ln"></div>
<div class="ln">        <span class="c">/* All other messages (a lot of them) are processed using default procedures */</span></div>
<div class="ln">        <span class="k">default</span><span class="y">:</span></div>
<div class="ln">            <span class="k">return</span> DefWindowProc<span class="y">(</span>hwnd<span class="y">,</span> Message<span class="y">,</span> wParam<span class="y">,</span> lParam<span class="y">);</span></div>
<div class="ln">    <span class="y">}</span></div>
<div class="ln">    <span class="k">return</span> <span class="n">0</span><span class="y">;</span></div>
<div class="ln"><span class="y">}</span></div>
<div class="ln"></div>
<div class="ln"><span class="c">/* The &#x27;main&#x27; function of Win32 GUI programs: this is where execution starts */</span></div>
<div class="ln"><span class="k">int</span> WINAPI WinMain<span class="y">(</span>HINSTANCE hInstance<span class="y">,</span> HINSTANCE hPrevInstance<span class="y">,</span> LPSTR lpCmdLine<span class="y">,</span> <span class="k">int</span> nCmdShow<span class="y">)</span> <span class="y">{</span></div>
<div class="ln">    WNDCLASSEX wc<span class="y">;</span> <span class="c">/* A properties struct of our window */</span></div>
<div class="ln">    HWND hwnd<span class="y">;</span> <span class="c">/* A &#x27;HANDLE&#x27;, hence the H, or a pointer to our window */</span></div>
<div class="ln">    MSG msg<span class="y">;</span> <span class="c">/* A temporary location for all messages */</span></div>
<div class="ln"></div>
<div class="ln">    <span class="c">/* zero out the struct and set the stuff we want to modify */</span></div>
<div class="ln">    memset<span class="y">(&amp;</span>wc<span class="y">,</span><span class="n">0</span><span class="y">,</span><span class="k">sizeof</span><span class="y">(</span>wc<span class="y">));</span></div>
<div class="ln">    wc<span class="y">.</span>cbSize        <span class="y">=</span> <span class="k">sizeof</span><span class="y">(</span>WNDCLASSEX<span class="y">);</span></div>
<div class="ln">    wc<span class="y">.</span>lpfnWndProc   <span class="y">=</span> WndProc<span class="y">;</span> <span class="c">/* This is where we will send messages to */</span></div>
<div class="ln">    wc<span class="y">.</span>hInstance     <span class="y">=</span> hInstance<span class="y">;</span></div>
<div class="ln">    wc<span class="y">.</span>hCursor       <span class="y">=</span> LoadCursor<span class="y">(</span>NULL<span class="y">,</span> IDC_ARROW<span class="y">);</span></div>
<div class="ln"></div>
<div class="ln">    <span class="c">/* White, COLOR_WINDOW is just a #define for a system color, try Ctrl+Clicking it */</span></div>
<div class="ln">    wc<span class="y">.</span>hbrBackground <span class="y">=</span> <span class="y">(</span>HBRUSH<span class="y">)(</span>COLOR_WINDOW<span class="y">+</span><span class="n">1</span><span class="y">);</span></div>
<div class="ln">    wc<span class="y">.</span>lpszClassName <span class="y">=</span> <span class="s">&quot;WindowClass&quot;</span><span class="y">;</span></div>
<div class="ln">    wc<span class="y">.</span>hIcon         <span class="y">=</span> LoadIcon<span class="y">(</span>NULL<span class="y">,</span> IDI_APPLICATION<span class="y">);</span> <span class="c">/* Load a standard icon */</span></div>
<div class="ln">    wc<span class="y">.</span>hIconSm       <span class="y">=</span> LoadIcon<span class="y">(</span>NULL<span class="y">,</span> IDI_APPLICATION<span class="y">);</span> <span class="c">/* use the name &quot;A&quot; to use the project icon */</span></div>
<div class="ln"></div>
</div>
<div id="nums" style="left:176px;top:134px;width:19px;height:546px;">
<div class="ln">1</div>
<div class="ln">2</div>
<div class="ln">3</div>
<div class="ln">4</div>
<div class="ln">5</div>
<div class="ln">6</div>
<div class="ln">7</div>
<div class="ln">8</div>
<div class="ln">9</div>
<div class="ln">10</div>
<div class="ln">11</div>
<div class="ln">12</div>
<div class="ln">13</div>
<div class="ln">14</div>
<div class="ln">15</div>
<div class="ln">16</div>
<div class="ln">17</div>
<div class="ln">18</div>
<div class="ln">19</div>
<div class="ln">20</div>
<div class="ln">21</div>
<div class="ln">22</div>
<div class="ln">23</div>
<div class="ln">24</div>
<div class="ln">25</div>
<div class="ln">26</div>
<div class="ln">27</div>
<div class="ln">28</div>
<div class="ln">29</div>
<div class="ln">30</div>
<div class="ln">31</div>
<div class="ln">32</div>
<div class="ln">33</div>
<div class="ln">34</div>
<div class="ln">35</div>
<div class="ln">36</div>
<div class="ln">37</div>
<div class="ln">38</div>
</div>
<div style="left:205px;top:191px;width:1px;height:205px;background:#000;"></div>
<div style="left:205px;top:395px;width:6px;height:1px;background:#000;"></div>
<div style="left:205px;top:290px;width:6px;height:1px;background:#000;"></div>
<div style="left:205px;top:365px;width:6px;height:1px;background:#000;"></div>
<div style="left:199px;top:179px;width:13px;height:13px;box-sizing:border-box;border:1px solid #000;background:#fff;"></div>
<div style="left:201px;top:185px;width:9px;height:1px;background:#000;"></div>
<div style="left:199px;top:194px;width:13px;height:13px;box-sizing:border-box;border:1px solid #000;background:#fff;"></div>
<div style="left:201px;top:200px;width:9px;height:1px;background:#000;"></div>
<div style="left:199px;top:239px;width:13px;height:13px;box-sizing:border-box;border:1px solid #000;background:#fff;"></div>
<div style="left:201px;top:245px;width:9px;height:1px;background:#000;"></div>
<div style="left:199px;top:434px;width:13px;height:13px;box-sizing:border-box;border:1px solid #000;background:#fff;"></div>
<div style="left:201px;top:440px;width:9px;height:1px;background:#000;"></div>
<div style="left:205px;top:446px;width:1px;height:234px;background:#000;"></div>
<div style="left:246px;top:208px;width:1px;height:150px;background:repeating-linear-gradient(#9a9a9a 0 1px,transparent 1px 2px);"></div>
<div style="left:274px;top:253px;width:1px;height:30px;background:repeating-linear-gradient(#9a9a9a 0 1px,transparent 1px 2px);"></div>
<div style="left:274px;top:343px;width:1px;height:15px;background:repeating-linear-gradient(#9a9a9a 0 1px,transparent 1px 2px);"></div>
<div style="left:9px;top:706px;width:1067px;height:7px;box-sizing:border-box;border:1px solid #828790;background:#fff;"></div>
<div style="left:11px;top:686px;width:83px;height:21px;box-sizing:border-box;border:1px solid #8b8f97;border-bottom:1px solid #828790;background:linear-gradient(#f4f4f4 0%,#ececec 48%,#dedede 52%,#d2d2d2 100%);box-shadow:inset 1px 1px 0 #fbfbfb,inset -1px 0 0 #fbfbfb;"></div>
<svg class="ic" style="left:17px;top:688px" width="16" height="16" viewBox="0 0 16 16"><rect x="0.5" y="0.5" width="6" height="6" fill="url(#gO)" stroke="#000"/><rect x="9.5" y="0.5" width="6" height="6" fill="url(#gGr)" stroke="#000"/><rect x="0.5" y="9.5" width="6" height="6" fill="url(#gB)" stroke="#000"/><rect x="9.5" y="9.5" width="6" height="6" fill="url(#gYl)" stroke="#000"/></svg>
<span id="t19" class="t ui" style="left:39.5px;top:701px;letter-spacing:0.186px;">Compiler</span>
<div style="left:94px;top:686px;width:87px;height:21px;box-sizing:border-box;border:1px solid #8b8f97;border-bottom:1px solid #828790;background:linear-gradient(#f4f4f4 0%,#ececec 48%,#dedede 52%,#d2d2d2 100%);box-shadow:inset 1px 1px 0 #fbfbfb,inset -1px 0 0 #fbfbfb;"></div>
<svg class="ic" style="left:100px;top:688px" width="16" height="16" viewBox="0 0 16 16"><rect x="0.500" y="0.500" width="8" height="8" fill="#8c8cff" stroke="#000"/><rect x="3.500" y="3.500" width="8" height="8" fill="#3fe080" stroke="#000"/><rect x="4" y="4" width="4" height="4" fill="#58b8a0" opacity="0.55"/><rect x="6.500" y="6.500" width="8" height="8" fill="#ff6464" stroke="#000"/><rect x="7" y="7" width="4" height="4" fill="#d87028" opacity="0.8"/></svg>
<span id="t20" class="t ui" style="left:122.7px;top:701px;letter-spacing:-0.484px;">Resources</span>
<div style="left:181px;top:686px;width:102px;height:21px;box-sizing:border-box;border:1px solid #8b8f97;border-bottom:1px solid #828790;background:linear-gradient(#f4f4f4 0%,#ececec 48%,#dedede 52%,#d2d2d2 100%);box-shadow:inset 1px 1px 0 #fbfbfb,inset -1px 0 0 #fbfbfb;"></div>
<svg class="ic" style="left:187px;top:688px" width="16" height="16" viewBox="0 0 16 16"><rect x="0.500" y="6.500" width="4" height="8" fill="url(#gO)" stroke="#000"/><rect x="4.500" y="2.500" width="4" height="12" fill="url(#gGr2)" stroke="#000"/><rect x="8.500" y="0.500" width="4" height="14" fill="url(#gB3)" stroke="#000"/><rect x="12.500" y="5.500" width="3" height="9" fill="url(#gYl)" stroke="#000"/></svg>
<span id="t21" class="t ui" style="left:209.6px;top:701px;letter-spacing:0.030px;">Compile Log</span>
<div style="left:283px;top:686px;width:69px;height:21px;box-sizing:border-box;border:1px solid #8b8f97;border-bottom:1px solid #828790;background:linear-gradient(#f4f4f4 0%,#ececec 48%,#dedede 52%,#d2d2d2 100%);box-shadow:inset 1px 1px 0 #fbfbfb,inset -1px 0 0 #fbfbfb;"></div>
<svg class="ic" style="left:289px;top:688px" width="16" height="16" viewBox="0 0 16 16"><path d="M0.800,8.300 L2.800,6.400 L6.200,9.800 L14.600,0.800 L15.400,1.400 L15.400,3.800 L6.400,14.400 L0.800,10.200 Z" fill="url(#gP)" stroke="#1a1a1a" stroke-width="0.900" stroke-linejoin="round"/></svg>
<span id="t22" class="t ui" style="left:311.5px;top:701px;letter-spacing:-0.075px;">Debug</span>
<div style="left:352px;top:686px;width:95px;height:21px;box-sizing:border-box;border:1px solid #8b8f97;border-bottom:1px solid #828790;background:linear-gradient(#f4f4f4 0%,#ececec 48%,#dedede 52%,#d2d2d2 100%);box-shadow:inset 1px 1px 0 #fbfbfb,inset -1px 0 0 #fbfbfb;"></div>
<svg class="ic" style="left:358px;top:688px" width="16" height="16" viewBox="0 0 16 16"><rect x="0.5" y="0.5" width="11" height="15" fill="url(#gG)" stroke="#000" stroke-width="1"/><path d="M1.5,15 V1.5 H11" fill="none" stroke="#fff" stroke-width="1"/><path d="M3,5.500 H4 M3,7.500 H4 M3,9.500 H4 M3,12.500 H5 M6,12.500 H7 M8,12.500 H9" stroke="#505050"/><path d="M11.5,10.600000000000001 L14.700000000000001,13.3" stroke="#000" stroke-width="3.4" stroke-linecap="round"/><path d="M11.9,10.8 L14.600000000000001,13.100000000000001" stroke="#f0a020" stroke-width="1.7" stroke-linecap="round"/><circle cx="8.3" cy="7.4" r="4.1" fill="url(#gLb)" stroke="#111" stroke-width="1.1" stroke-dasharray="2.2,0.7"/><circle cx="8.3" cy="7.4" r="3.4" fill="url(#gLb)"/></svg>
<span id="t23" class="t ui" style="left:380.5px;top:701px;letter-spacing:-0.309px;">Find Results</span>
<div style="left:9px;top:714px;width:1069px;height:1px;background:#a0a0a0;"></div>
<div style="left:9px;top:715px;width:1069px;height:1px;background:#fff;"></div>
<div style="left:9px;top:716px;width:1069px;height:18px;background:#f0eeed;"></div>
<div style="left:488px;top:717px;width:1px;height:16px;background:#d4d2d1;"></div>
<div style="left:489px;top:717px;width:1px;height:16px;background:#faf9f9;"></div>
<div style="left:568px;top:717px;width:1px;height:16px;background:#d4d2d1;"></div>
<div style="left:569px;top:717px;width:1px;height:16px;background:#faf9f9;"></div>
<span id="t24" class="t ui" style="left:11px;top:729px;letter-spacing:-0.206px;">Line:</span>
<span id="t25" class="t ui" style="left:50px;top:729px;letter-spacing:0.000px;">1</span>
<span id="t26" class="t ui" style="left:102px;top:729px;letter-spacing:-0.086px;">Col:</span>
<span id="t27" class="t ui" style="left:137px;top:729px;letter-spacing:0.000px;">1</span>
<span id="t28" class="t ui" style="left:189px;top:729px;letter-spacing:-0.672px;">Sel:</span>
<span id="t29" class="t ui" style="left:221px;top:729px;letter-spacing:0.000px;">0</span>
<span id="t30" class="t ui" style="left:274px;top:729px;letter-spacing:-0.422px;">Lines:</span>
<span id="t31" class="t ui" style="left:315px;top:729px;letter-spacing:-0.680px;">66</span>
<span id="t32" class="t ui" style="left:372px;top:729px;letter-spacing:-0.078px;">Length:</span>
<span id="t33" class="t ui" style="left:418px;top:729px;letter-spacing:-0.801px;">2408</span>
<span id="t34" class="t ui" style="left:492.5px;top:729px;letter-spacing:-0.086px;">Insert</span>
<div style="left:1077px;top:716px;width:1px;height:18px;background:#fff;"></div>
<svg class="ic" style="left:1066px;top:724px" width="12" height="12" viewBox="0 0 12 12"><rect x="8" y="0" width="2" height="2" fill="#c4c2c1"/><rect x="9" y="1" width="1" height="1" fill="#fff"/><rect x="5" y="3" width="2" height="2" fill="#c4c2c1"/><rect x="6" y="4" width="1" height="1" fill="#fff"/><rect x="8" y="3" width="2" height="2" fill="#c4c2c1"/><rect x="9" y="4" width="1" height="1" fill="#fff"/><rect x="2" y="6" width="2" height="2" fill="#c4c2c1"/><rect x="3" y="7" width="1" height="1" fill="#fff"/><rect x="5" y="6" width="2" height="2" fill="#c4c2c1"/><rect x="6" y="7" width="1" height="1" fill="#fff"/><rect x="8" y="6" width="2" height="2" fill="#c4c2c1"/><rect x="9" y="7" width="1" height="1" fill="#fff"/></svg>
</body></html>
